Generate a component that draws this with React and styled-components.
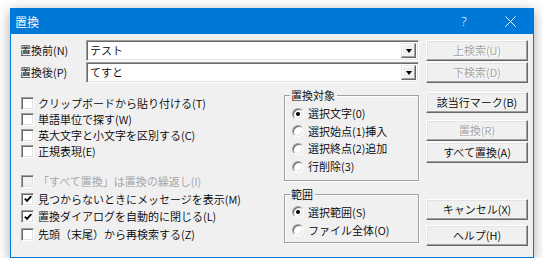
import React from 'react'
import styled, { createGlobalStyle } from 'styled-components'

const FONT = '"Noto Sans CJK JP", "Noto Sans", sans-serif'

const GlobalStyle = createGlobalStyle`
  body {
    margin: 0;
    background: #ffffff;
    font-family: ${FONT};
  }
`

const Stage = styled.div`
  padding: 8px 0 0 10px;
`

const Window = styled.div`
  width: 524px;
  height: 250px;
  box-sizing: border-box;
  border: 1px solid #0078d7;
  background: #f0f0f0;
  box-shadow: 0 3px 12px rgba(0, 0, 0, 0.35);
  display: flex;
  flex-direction: column;
  font-size: 11px;
  font-weight: 350;
  line-height: 13px;
  color: #000;
`

const TitleBar = styled.div`
  height: 25px;
  flex: none;
  background: #0078d7;
  color: #fff;
  display: flex;
  align-items: center;
`

const Title = styled.span`
  flex: 1;
  padding-left: 4px;
  font-size: 12px;
`

const CaptionButton = styled.div`
  width: 46px;
  height: 100%;
  display: flex;
  align-items: center;
  justify-content: center;
  font-family: "Noto Sans", sans-serif;
  font-size: 13px;
  font-weight: 300;
`

const Client = styled.div`
  flex: 1;
  display: flex;
  gap: 7px;
  padding: 6px 5px 0 9px;
`

const Main = styled.div`
  width: 399px;
  display: flex;
  flex-direction: column;
`

const FieldRow = styled.div`
  display: flex;
  align-items: center;
  height: 21px;
  & + & {
    margin-top: 1px;
  }
`

const FieldLabel = styled.span`
  width: 66px;
  white-space: nowrap;
`

const Combo = styled.div`
  width: 333px;
  height: 21px;
  box-sizing: border-box;
  background: #fff;
  border: 1px solid;
  border-color: #a0a0a0 #fff #fff #a0a0a0;
  box-shadow: inset 1px 1px 0 #696969, inset -1px -1px 0 #e3e3e3;
  display: flex;
  align-items: center;
  padding: 1px 2px 1px 3px;
`

const ComboText = styled.span`
  flex: 1;
`

const DropButton = styled.span`
  width: 15px;
  height: 15px;
  box-sizing: border-box;
  background: #f0f0f0;
  border: 1px solid;
  border-color: #e3e3e3 #696969 #696969 #e3e3e3;
  box-shadow: inset -1px -1px 0 #a0a0a0, inset 1px 1px 0 #fff;
  display: flex;
  align-items: center;
  justify-content: center;

  &::after {
    content: '';
    border-left: 3.5px solid transparent;
    border-right: 3.5px solid transparent;
    border-top: 4px solid #000;
  }
`

const Lower = styled.div`
  display: flex;
  margin-top: 6px;
`

const Options = styled.div`
  flex: 1;
  display: flex;
  flex-direction: column;
  padding-top: 6px;
`

const OptionGroup = styled.div`
  display: flex;
  flex-direction: column;
  & + & {
    margin-top: 14px;
  }
`

const OptionRow = styled.div`
  display: flex;
  align-items: center;
  gap: 4px;
  height: ${p => p.$h}px;
  padding-left: 1px;
  white-space: nowrap;
  color: ${p => (p.$disabled ? '#a0a0a0' : '#000')};
`

const Check = styled.span`
  flex: none;
  width: 13px;
  height: 13px;
  box-sizing: border-box;
  background: ${p => (p.$disabled ? '#f0f0f0' : '#fff')};
  border: 1px solid;
  border-color: #a0a0a0 #fff #fff #a0a0a0;
  box-shadow: inset 1px 1px 0 #696969, inset -1px -1px 0 #e3e3e3;
  display: flex;
  align-items: center;
  justify-content: center;
`

const Radio = styled.span`
  flex: none;
  width: 12px;
  height: 12px;
  box-sizing: border-box;
  border-radius: 50%;
  background: #fff;
  border: 1px solid;
  border-color: #a0a0a0 #fff #fff #a0a0a0;
  box-shadow: inset 1px 1px 0 #696969, inset -1px -1px 0 #e3e3e3;
  display: flex;
  align-items: center;
  justify-content: center;

  &::after {
    content: '';
    display: ${p => (p.$checked ? 'block' : 'none')};
    width: 4px;
    height: 4px;
    border-radius: 50%;
    background: #000;
  }
`

const Groups = styled.div`
  width: 135px;
  display: flex;
  flex-direction: column;
  gap: 7px;
`

const Group = styled.fieldset`
  margin: 0;
  min-width: 0;
  padding: ${p => p.$padTop}px 4px ${p => p.$padBottom}px 6px;
  border: 1px solid #a0a0a0;
  box-shadow: inset 1px 1px 0 #fff, 1px 1px 0 #fff;
`

const Legend = styled.legend`
  padding: 0 2px 0 1px;
  margin-left: -1px;
  line-height: 13px;
  background: #f0f0f0;
`

const ButtonColumn = styled.div`
  width: 102px;
  display: flex;
  flex-direction: column;
`

const Button = styled.div`
  height: 21px;
  box-sizing: border-box;
  margin-top: ${p => p.$gap || 0}px;
  background: #f0f0f0;
  border: 1px solid;
  border-color: #fff #696969 #696969 #fff;
  box-shadow: inset -1px -1px 0 #a0a0a0, inset 1px 1px 0 #e3e3e3;
  display: flex;
  align-items: center;
  justify-content: center;
  white-space: nowrap;
  color: ${p => (p.$disabled ? '#a0a0a0' : '#000')};
  text-shadow: ${p => (p.$disabled ? '1px 1px 0 #fff' : 'none')};
`

const CheckMark = () => (
  <svg width="8" height="8" viewBox="0 0 8 8">
    <path d="M0.8 3.6 L3 5.8 L7.3 1.2" stroke="#000" strokeWidth="1.9" fill="none" />
  </svg>
)

const CloseIcon = () => (
  <svg width="11" height="11" viewBox="0 0 11 11">
    <path d="M0.5 0.5 L10.5 10.5 M10.5 0.5 L0.5 10.5" stroke="#fff" strokeWidth="1" fill="none" />
  </svg>
)

const searchOptions = [
  { label: 'クリップボードから貼り付ける(T)' },
  { label: '単語単位で探す(W)' },
  { label: '英大文字と小文字を区別する(C)' },
  { label: '正規表現(E)' },
]

const behaviourOptions = [
  { label: '「すべて置換」は置換の繰返し(I)', disabled: true },
  { label: '見つからないときにメッセージを表示(M)', checked: true },
  { label: '置換ダイアログを自動的に閉じる(L)', checked: true },
  { label: '先頭（末尾）から再検索する(Z)' },
]

const targets = ['選択文字(0)', '選択始点(1)挿入', '選択終点(2)追加', '行削除(3)']
const ranges = ['選択範囲(S)', 'ファイル全体(O)']

const buttons = [
  { label: '上検索(U)', disabled: true, gap: 0 },
  { label: '下検索(D)', disabled: true, gap: 1 },
  { label: '該当行マーク(B)', gap: 9 },
  { label: '置換(R)', disabled: true, gap: 7 },
  { label: 'すべて置換(A)', gap: 1 },
  { label: 'キャンセル(X)', gap: 36 },
  { label: 'ヘルプ(H)', gap: 5 },
]

const CheckList = ({ items, rowHeight }) => (
  <OptionGroup>
    {items.map(item => (
      <OptionRow key={item.label} $h={rowHeight} $disabled={item.disabled}>
        <Check $disabled={item.disabled}>{item.checked && <CheckMark />}</Check>
        {item.label}
      </OptionRow>
    ))}
  </OptionGroup>
)

const RadioList = ({ items, rowHeight }) =>
  items.map((label, i) => (
    <OptionRow key={label} $h={rowHeight}>
      <Radio $checked={i === 0} />
      {label}
    </OptionRow>
  ))

const App = () => (
  <Stage>
    <GlobalStyle />
    <Window>
      <TitleBar>
        <Title>置換</Title>
        <CaptionButton>?</CaptionButton>
        <CaptionButton>
          <CloseIcon />
        </CaptionButton>
      </TitleBar>

      <Client>
        <Main>
          <FieldRow>
            <FieldLabel>置換前(N)</FieldLabel>
            <Combo>
              <ComboText>テスト</ComboText>
              <DropButton />
            </Combo>
          </FieldRow>
          <FieldRow>
            <FieldLabel>置換後(P)</FieldLabel>
            <Combo>
              <ComboText>てすと</ComboText>
              <DropButton />
            </Combo>
          </FieldRow>

          <Lower>
            <Options>
              <CheckList items={searchOptions} rowHeight={16} />
              <CheckList items={behaviourOptions} rowHeight={17.5} />
            </Options>

            <Groups>
              <Group $padTop={3} $padBottom={5}>
                <Legend>置換対象</Legend>
                <RadioList items={targets} rowHeight={17.6} />
              </Group>
              <Group $padTop={2} $padBottom={3}>
                <Legend>範囲</Legend>
                <RadioList items={ranges} rowHeight={18} />
              </Group>
            </Groups>
          </Lower>
        </Main>

        <ButtonColumn>
          {buttons.map(b => (
            <Button key={b.label} $gap={b.gap} $disabled={b.disabled}>
              {b.label}
            </Button>
          ))}
        </ButtonColumn>
      </Client>
    </Window>
  </Stage>
)

export default App
